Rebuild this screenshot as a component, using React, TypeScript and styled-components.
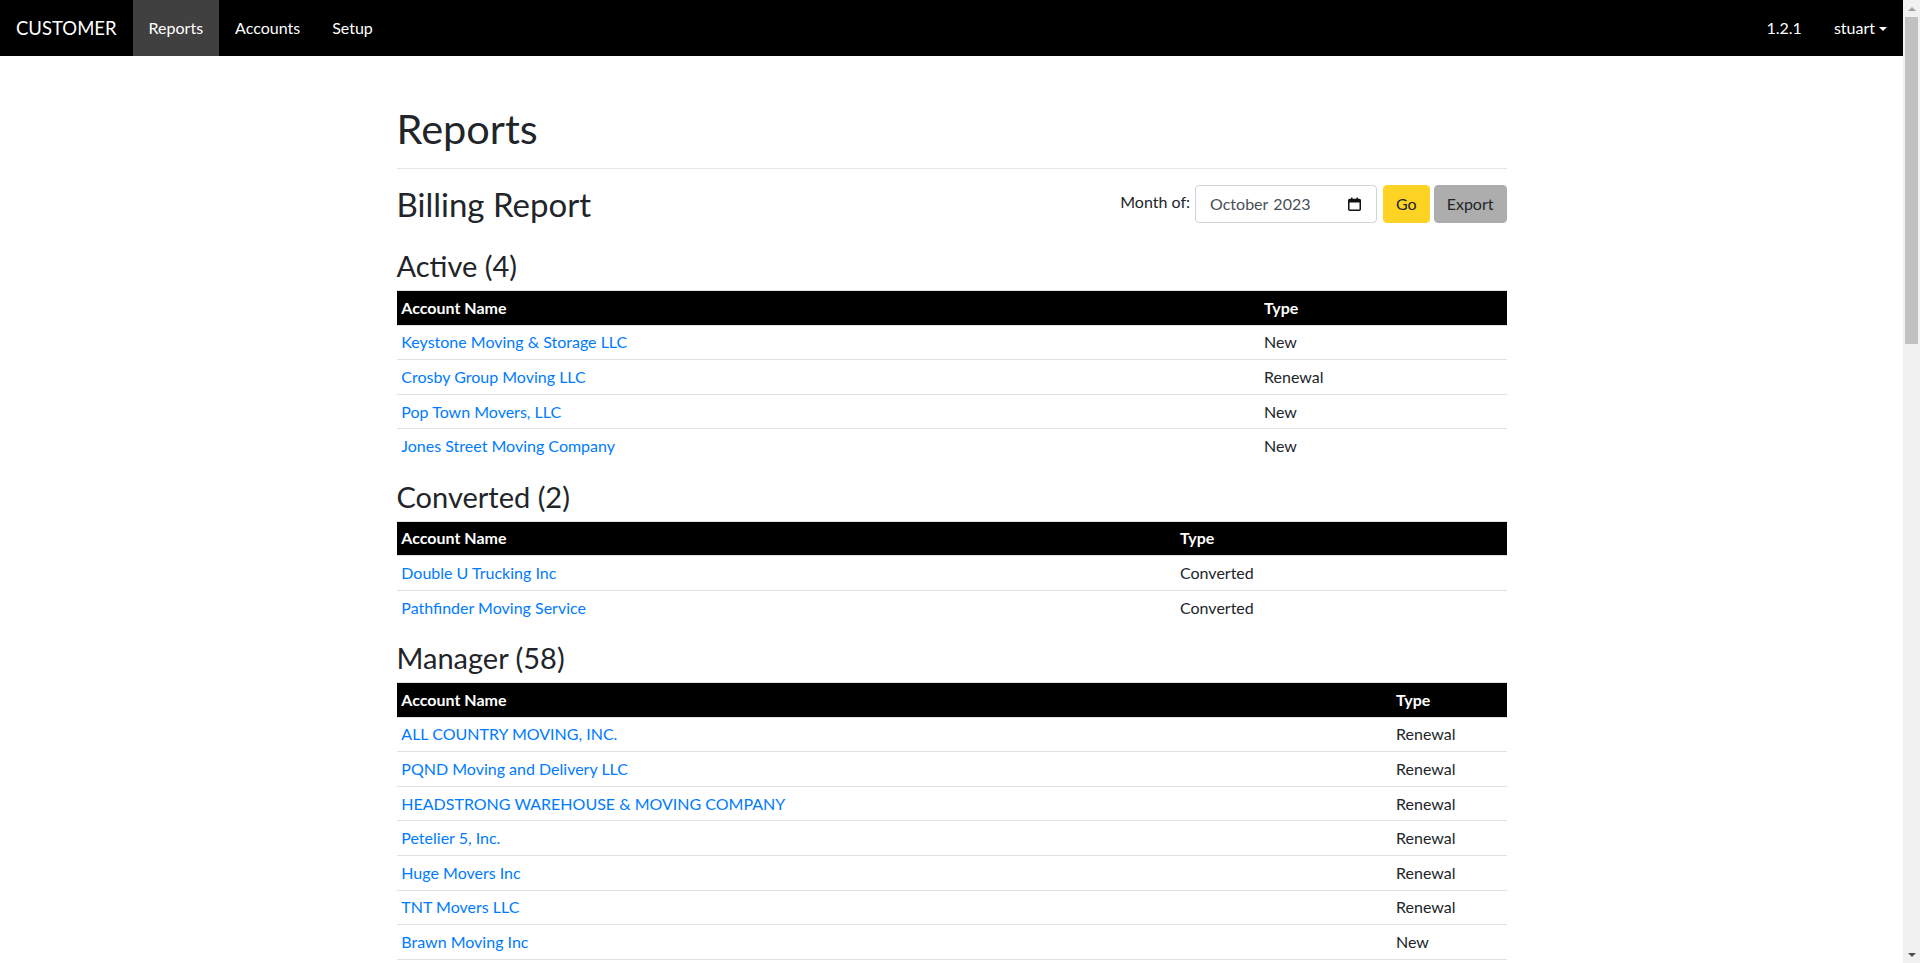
import React from "react";
import styled, { createGlobalStyle, css } from "styled-components";

const GlobalStyle = createGlobalStyle`
  *, *::before, *::after { box-sizing: border-box; }
  html, body { margin: 0; padding: 0; }
  body {
    font-family: "Segoe UI", Lato, "Noto Sans", "Liberation Sans", sans-serif;
    font-size: 16px;
    line-height: 1.5;
    color: #212529;
    background: #fff;
  }
`;

/* Page area leaves room for the (drawn) classic scrollbar on the right */
const Page = styled.div`
  margin-right: 17px;
`;

const ScrollBar = styled.div`
  position: fixed;
  top: 0;
  right: 0;
  width: 17px;
  height: 100vh;
  display: flex;
  flex-direction: column;
  background: #f1f1f1;
  z-index: 10;
`;

const ScrollButton = styled.div<{ $dir: "up" | "down" }>`
  flex: none;
  height: 17px;
  display: flex;
  align-items: center;
  justify-content: center;
  &::after {
    content: "";
    width: 0;
    height: 0;
    border-left: 4px solid transparent;
    border-right: 4px solid transparent;
    ${(p) =>
      p.$dir === "up"
        ? css`
            border-bottom: 4px solid #a3a3a3;
          `
        : css`
            border-top: 4px solid #505050;
          `}
  }
`;

const ScrollTrack = styled.div`
  flex: 1;
  padding: 0 2px;
`;

const ScrollThumb = styled.div`
  height: 327px;
  background: #c1c1c1;
`;

const Navbar = styled.nav`
  display: flex;
  align-items: stretch;
  justify-content: space-between;
  height: 56px;
  padding: 0 0 0 16px;
  background: #000;
`;

const Brand = styled.a`
  display: flex;
  align-items: center;
  margin-right: 16px;
  font-size: 18.5px;
  line-height: 30px;
  color: #fff;
  text-decoration: none;
  white-space: nowrap;
`;

const NavGroup = styled.ul<{ $grow?: boolean }>`
  display: flex;
  align-items: stretch;
  margin: 0;
  padding: 0;
  list-style: none;
  flex: ${(p) => (p.$grow ? 1 : "none")};
`;

const NavLink = styled.a<{ $active?: boolean }>`
  display: flex;
  align-items: center;
  height: 100%;
  padding: 0 16px;
  color: #fff;
  text-decoration: none;
  white-space: nowrap;
  ${(p) =>
    p.$active &&
    css`
      background: #404040;
    `}
`;

const Caret = styled.span`
  display: inline-block;
  margin-left: 4px;
  width: 0;
  height: 0;
  border-top: 4.8px solid #fff;
  border-left: 4px solid transparent;
  border-right: 4px solid transparent;
  transform: translateY(1px);
`;

const Container = styled.main`
  max-width: 1140px;
  margin: 0 auto;
  padding: 48px 15px 0;
`;

const PageHeader = styled.div`
  padding-bottom: 8px;
  border-bottom: 1px solid #e6e6e6;
`;

const H1 = styled.h1`
  margin: 0 0 8px;
  font-size: 41.5px;
  line-height: 48px;
  font-weight: 400;
`;

const ReportBar = styled.div`
  display: flex;
  align-items: center;
  justify-content: space-between;
  margin: 16px 0 25px;
`;

const H2 = styled.h2`
  margin: 0;
  font-size: 33px;
  line-height: 38.4px;
  font-weight: 400;
`;

const MonthForm = styled.form`
  display: flex;
  align-items: center;
`;

const Label = styled.label`
  margin-right: 5px;
  transform: translateY(-2px);
`;

const MonthField = styled.div`
  display: flex;
  align-items: center;
  justify-content: space-between;
  width: 182px;
  height: 38px;
  padding: 6px 15px 6px 14px;
  font-size: 16px;
  line-height: 1.5;
  color: #495057;
  background: #fff;
  border: 1px solid #ced4da;
  border-radius: 4px;
  margin-right: 6px;
  cursor: text;
`;

const MonthText = styled.span`
  display: flex;
  gap: 5px;
  white-space: nowrap;
`;

const Button = styled.button<{ $variant: "go" | "export" }>`
  height: 38px;
  padding: 6px 12px;
  font-family: inherit;
  font-size: 16px;
  line-height: 1.5;
  color: #212529;
  border: 1px solid transparent;
  border-radius: 4px;
  cursor: pointer;
  background: ${(p) => (p.$variant === "go" ? "#fed323" : "#adadad")};
  border-color: ${(p) => (p.$variant === "go" ? "#fed323" : "#adadad")};
  & + & {
    margin-left: 4px;
  }
`;

const H3 = styled.h3`
  margin: 0 0 7px;
  padding-top: 1px;
  font-size: 29px;
  line-height: 33.6px;
  font-weight: 400;
`;

const Table = styled.table`
  width: 100%;
  margin-bottom: 16px;
  border-collapse: collapse;
  table-layout: fixed;
`;

const TypeCol = styled.col<{ $w: number }>`
  width: ${(p) => p.$w}px;
`;

const Th = styled.th`
  padding: 4.8px;
  text-align: left;
  font-weight: 700;
  color: #fff;
  background: #000;
  border-top: 1px solid #dee2e6;
  border-bottom: 1px solid #dee2e6;
  vertical-align: bottom;
`;

const Td = styled.td`
  padding: 4.8px;
  border-top: 1px solid #dee2e6;
  vertical-align: top;
`;

const AccountLink = styled.a`
  color: #007bff;
  text-decoration: none;
`;

function CalendarIcon() {
  return (
    <svg width="13" height="14" viewBox="0 0 13 14" aria-hidden="true">
      <rect x="0.75" y="2.5" width="11.5" height="10.75" rx="1" fill="none" stroke="#111" strokeWidth="1.5" />
      <rect x="0.75" y="2.5" width="11.5" height="3" fill="#111" />
      <rect x="3" y="0.5" width="1.5" height="3" fill="#111" />
      <rect x="8.5" y="0.5" width="1.5" height="3" fill="#111" />
    </svg>
  );
}

type Row = { name: string; type: string };

const active: Row[] = [
  { name: "Keystone Moving & Storage LLC", type: "New" },
  { name: "Crosby Group Moving LLC", type: "Renewal" },
  { name: "Pop Town Movers, LLC", type: "New" },
  { name: "Jones Street Moving Company", type: "New" },
];

const converted: Row[] = [
  { name: "Double U Trucking Inc", type: "Converted" },
  { name: "Pathfinder Moving Service", type: "Converted" },
];

const managerVisible: Row[] = [
  { name: "ALL COUNTRY MOVING, INC.", type: "Renewal" },
  { name: "PQND Moving and Delivery LLC", type: "Renewal" },
  { name: "HEADSTRONG WAREHOUSE & MOVING COMPANY", type: "Renewal" },
  { name: "Petelier 5, Inc.", type: "Renewal" },
  { name: "Huge Movers Inc", type: "Renewal" },
  { name: "TNT Movers LLC", type: "Renewal" },
  { name: "Brawn Moving Inc", type: "New" },
];

const extraNames = [
  "Blue Ridge Relocation LLC", "Summit Van Lines", "Harbor City Movers", "Cardinal Moving Co",
  "Lakeside Transfer Inc", "Red Oak Moving LLC", "Metro Haul Services", "Prairie Movers Inc",
  "Granite State Moving", "Silverline Logistics", "Northstar Moving LLC", "Evergreen Relocation",
  "Bayview Moving & Storage", "Ironside Movers", "Cornerstone Moving Co", "Riverbend Transport",
  "Pioneer Van Service", "Atlas Home Movers", "Golden Gate Moving", "Sunrise Moving LLC",
  "Westfield Movers Inc", "Copper Canyon Moving", "Liberty Lane Movers", "Maple Leaf Moving",
  "Highland Transfer Co", "Oceanside Movers LLC", "Pinecrest Moving", "Union Street Movers",
  "Heritage Moving Group", "Eagle Eye Relocation", "Crescent Moving Co", "Stonebridge Movers",
  "Falcon Moving LLC", "Greenway Transport", "Capital City Movers", "Sterling Moving Inc",
  "Twin Rivers Moving", "Keystone Haulers", "Brightpath Movers", "Oak Hill Moving LLC",
  "Frontier Moving Co", "Lighthouse Movers", "Valley Forge Moving", "Patriot Van Lines",
  "Cedar Point Movers", "Horizon Moving LLC", "Rock Creek Transfer", "Clearwater Movers",
  "Windmill Moving Co", "Beacon Hill Movers", "Timberline Moving",
];

const manager: Row[] = [
  ...managerVisible,
  ...extraNames.map((name, i) => ({ name, type: i % 4 === 0 ? "New" : "Renewal" })),
];

function ReportTable({ title, rows, typeWidth }: { title: string; rows: Row[]; typeWidth: number }) {
  return (
    <section>
      <H3>{title}</H3>
      <Table>
        <colgroup>
          <col />
          <TypeCol $w={typeWidth} />
        </colgroup>
        <thead>
          <tr>
            <Th>Account Name</Th>
            <Th>Type</Th>
          </tr>
        </thead>
        <tbody>
          {rows.map((r) => (
            <tr key={r.name}>
              <Td>
                <AccountLink href="#">{r.name}</AccountLink>
              </Td>
              <Td>{r.type}</Td>
            </tr>
          ))}
        </tbody>
      </Table>
    </section>
  );
}

export default function App() {
  return (
    <>
      <GlobalStyle />
      <Page>
        <Navbar>
          <NavGroup $grow>
            <Brand href="#">CUSTOMER</Brand>
            <li><NavLink href="#" $active>Reports</NavLink></li>
            <li><NavLink href="#">Accounts</NavLink></li>
            <li><NavLink href="#">Setup</NavLink></li>
          </NavGroup>
          <NavGroup>
            <li><NavLink href="#">1.2.1</NavLink></li>
            <li>
              <NavLink href="#">
                stuart
                <Caret />
              </NavLink>
            </li>
          </NavGroup>
        </Navbar>
        <Container>
          <PageHeader>
            <H1>Reports</H1>
          </PageHeader>
          <ReportBar>
            <H2>Billing Report</H2>
            <MonthForm onSubmit={(e) => e.preventDefault()}>
              <Label htmlFor="month">Month of:</Label>
              <MonthField id="month" role="textbox" aria-label="Month of">
                <MonthText>
                  <span>October</span>
                  <span>2023</span>
                </MonthText>
                <CalendarIcon />
              </MonthField>
              <Button type="submit" $variant="go">Go</Button>
              <Button type="button" $variant="export">Export</Button>
            </MonthForm>
          </ReportBar>
          <ReportTable title="Active (4)" rows={active} typeWidth={247.3} />
          <ReportTable title="Converted (2)" rows={converted} typeWidth={331.3} />
          <ReportTable title="Manager (58)" rows={manager} typeWidth={115.3} />
        </Container>
      </Page>
      <ScrollBar aria-hidden="true">
        <ScrollButton $dir="up" />
        <ScrollTrack>
          <ScrollThumb />
        </ScrollTrack>
        <ScrollButton $dir="down" />
      </ScrollBar>
    </>
  );
}
